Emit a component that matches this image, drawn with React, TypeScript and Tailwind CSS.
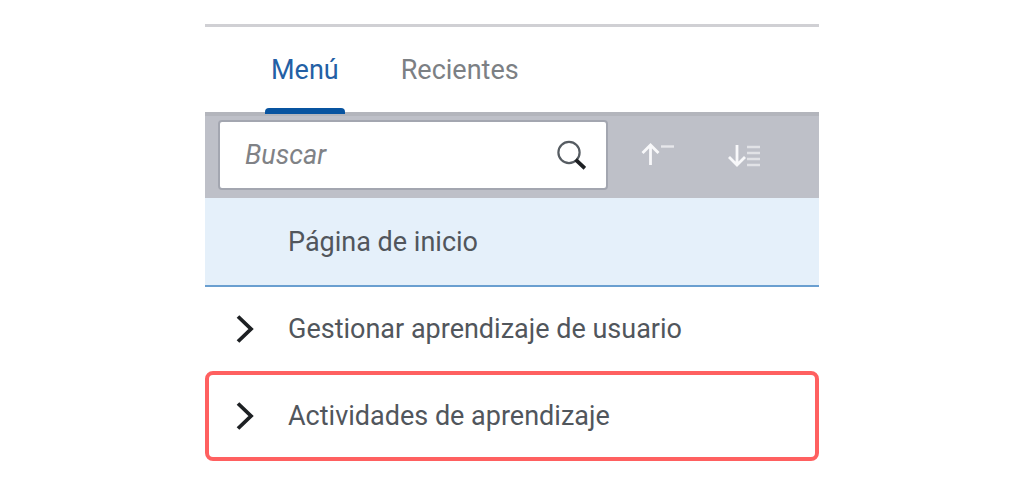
import { useState } from "react";

const tabs = ["Menú", "Recientes"];

function SearchIcon() {
  return (
    <svg viewBox="0 0 30 30" className="size-[30px]" fill="none" aria-hidden="true">
      <circle cx="13" cy="12.5" r="10.6" stroke="#565c62" strokeWidth="2.2" />
      <path d="M21 21 L27.5 27" stroke="#1d2023" strokeWidth="3.8" strokeLinecap="square" />
    </svg>
  );
}

function CollapseIcon() {
  return (
    <svg viewBox="0 0 34 24" className="h-6 w-[34px]" fill="none" stroke="currentColor" aria-hidden="true">
      <path d="M10.5 22 V2 M2.5 10 L10.5 2 L18.5 10" strokeWidth="2.8" />
      <path d="M21 3.5 H34" strokeWidth="2.4" opacity="0.7" />
    </svg>
  );
}

function ExpandIcon() {
  return (
    <svg viewBox="0 0 34 24" className="h-6 w-[34px]" fill="none" stroke="currentColor" aria-hidden="true">
      <path d="M10 2 V22 M2 14 L10 22 L18 14" strokeWidth="2.8" />
      <path d="M20 4 H33 M20 10 H33 M20 16 H33 M20 22 H33" strokeWidth="2.4" opacity="0.6" />
    </svg>
  );
}

function Chevron() {
  return (
    <svg viewBox="0 0 18 30" className="h-[30px] w-[18px]" fill="none" aria-hidden="true">
      <path d="M2 2.5 L15 15 L2 27.5" stroke="#1d2023" strokeWidth="3.8" />
    </svg>
  );
}

export default function App() {
  const [active, setActive] = useState("Menú");
  const [query, setQuery] = useState("");

  return (
    <div className="min-h-screen bg-white pt-6 font-['Roboto','Liberation_Sans',sans-serif] text-[27px] leading-8 text-[#51565c]">
      <div className="mx-auto w-full max-w-[614px]">
        <div role="tablist" className="flex h-[88px] gap-[50px] border-t-[3px] border-[#d0d0d4] px-[60px]">
          {tabs.map((tab) => (
            <button
              key={tab}
              type="button"
              role="tab"
              aria-selected={active === tab}
              onClick={() => setActive(tab)}
              className={
                active === tab
                  ? "relative px-1.5 text-[#2360a5] after:absolute after:inset-x-0 after:-bottom-0.5 after:h-1.5 after:rounded-t after:bg-[#0854a0]"
                  : "relative px-1.5 text-[#7c8084]"
              }
            >
              {tab}
            </button>
          ))}
        </div>
        <div className="flex h-[86px] items-center border-t-4 border-[#b3b5bc] bg-[#bec0c8] pb-1 pl-[13px]">
          <div className="flex h-[70px] w-[390px] items-center rounded border-2 border-[#a3a6b0] bg-white pr-5 pl-[25px]">
            <input
              type="text"
              aria-label="Buscar"
              placeholder="Buscar"
              value={query}
              onChange={(e) => setQuery(e.target.value)}
              className="h-10 min-w-0 flex-1 bg-transparent outline-none placeholder:text-[#808286] placeholder:italic"
            />
            <button type="button" aria-label="Iniciar búsqueda">
              <SearchIcon />
            </button>
          </div>
          <div className="flex gap-[53px] pl-8 text-[#f8f8fa]">
            <button type="button" aria-label="Contraer todo">
              <CollapseIcon />
            </button>
            <button type="button" aria-label="Expandir todo">
              <ExpandIcon />
            </button>
          </div>
        </div>
        <nav>
          <a href="#inicio" className="flex h-[89px] items-center border-b-2 border-[#6a9fd0] bg-[#e5f0fa] pl-[83px]">
            Página de inicio
          </a>
          <a href="#gestionar" className="flex h-[84px] items-center gap-[34px] pl-[31px]">
            <Chevron />
            Gestionar aprendizaje de usuario
          </a>
          <a href="#actividades" className="flex h-[90px] items-center gap-[34px] rounded-lg border-4 border-[#ff6060] pl-[27px]">
            <Chevron />
            Actividades de aprendizaje
          </a>
        </nav>
      </div>
    </div>
  );
}
